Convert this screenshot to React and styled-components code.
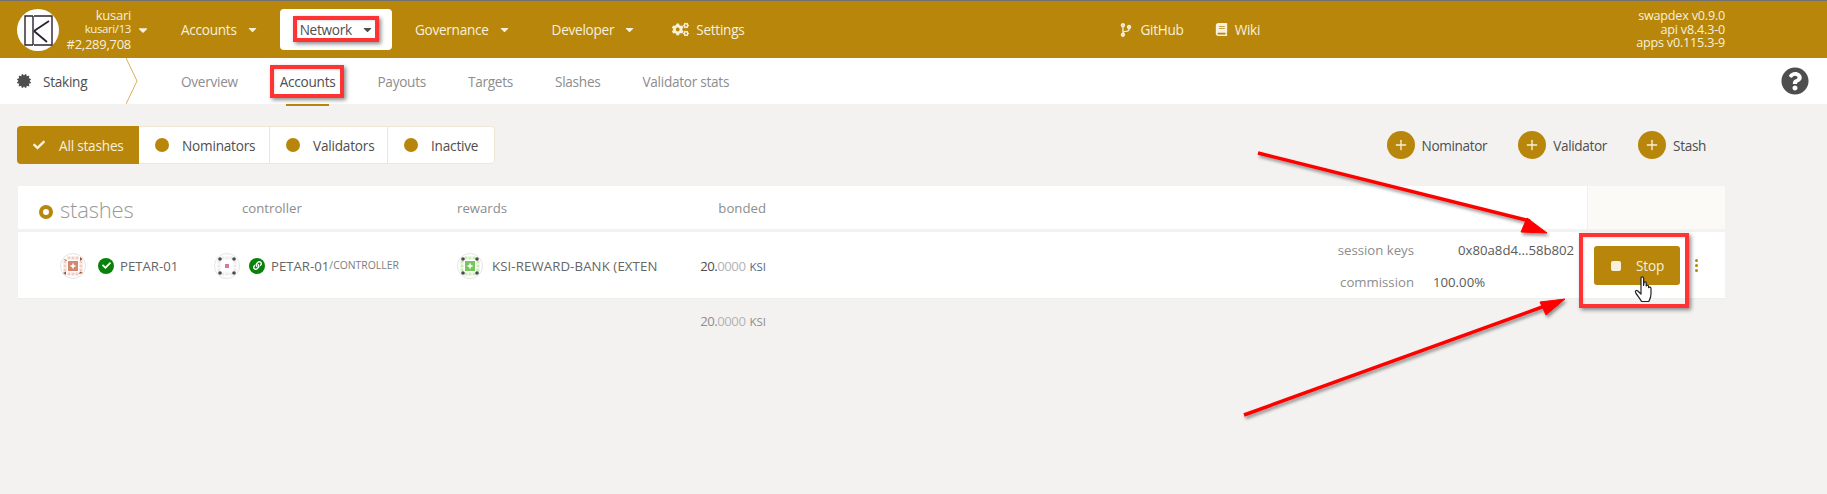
import React from 'react';
import styled, { createGlobalStyle } from 'styled-components';
import { FaCaretDown, FaCogs, FaCodeBranch, FaBook, FaCertificate, FaQuestionCircle, FaCheck, FaLink } from 'react-icons/fa';
import { Plus } from 'lucide-react';

const GOLD = '#b8860b';

const Global = createGlobalStyle`
  html, body { margin: 0; padding: 0; height: 494px; overflow: hidden; background: #f3f2f1; }
  body { font-family: "Open Sans", "Noto Sans", sans-serif; color: #4e4e4e; }
  * { box-sizing: border-box; }
`;

const Page = styled.div`
  position: relative;
  width: 1827px;
  height: 494px;
  overflow: hidden;
`;

const Header = styled.header`
  display: flex;
  align-items: center;
  height: 58px;
  background: ${GOLD};
  border-top: 1px solid #707070;
  padding: 0 102px 0 17px;
  color: #f6f0dc;
  font-size: 13.6px;
  letter-spacing: -0.27px;
`;

const BlockInfo = styled.div`
  display: flex;
  flex-direction: column;
  align-items: flex-end;
  width: 72px;
  line-height: 14.5px;
  font-size: 13px;
  white-space: nowrap;
`;

const BlockSub = styled.span`
  font-size: 11.5px;
  letter-spacing: -0.4px;
`;

const BlockCaret = styled.span`
  display: flex;
  margin: 1px 0 0 5px;
  font-size: 14px;
  width: 25px;
`;

const NavList = styled.nav`
  display: flex;
  align-items: center;
  gap: 3px;
`;

const NavItem = styled.div`
  display: flex;
  align-items: center;
  gap: ${p => p.$gap ?? 9}px;
  height: 41px;
  padding: ${p => p.$pad ?? '0 18px 0 20px'};
  border-radius: 4px;
  background: ${p => (p.$active ? '#fff' : 'transparent')};
  color: ${p => (p.$active ? '#4e4e4e' : 'inherit')};
  white-space: nowrap;
  svg { flex: none; }
`;

const Links = styled.div`
  display: flex;
  align-items: center;
  gap: 31px;
  margin-left: 375px;
  flex: 1;
`;

const LinkItem = styled.div`
  display: flex;
  align-items: center;
  gap: 7px;
`;

const Versions = styled.div`
  text-align: right;
  font-size: 12.6px;
  line-height: 13.5px;
  letter-spacing: -0.2px;
`;

const SubNav = styled.div`
  display: flex;
  align-items: center;
  height: 46px;
  background: #fff;
  font-size: 13.6px;
  letter-spacing: -0.27px;
  padding-left: 17px;
`;

const SectionName = styled.div`
  display: flex;
  align-items: center;
  gap: 12px;
  width: 109px;
  color: #4e4e4e;
`;

const Chevron = styled.svg`
  width: 12px;
  height: 46px;
  flex: none;
  margin-right: 43px;
`;

const Tabs = styled.div`
  display: flex;
  gap: 42px;
  height: 100%;
`;

const Tab = styled.div`
  position: relative;
  display: flex;
  align-items: center;
  color: ${p => (p.$active ? '#4e4e4e' : '#8d8d8d')};
  ${p => p.$active && `
    &::after {
      content: '';
      position: absolute;
      left: 6px;
      right: 6px;
      bottom: -2px;
      height: 2px;
      background: ${GOLD};
    }
  `}
`;

const Help = styled.div`
  display: flex;
  margin-left: auto;
  margin-right: 18px;
  color: #4e4e4e;
`;

const Content = styled.main`
  padding: 22px 102px 0 17px;
`;

const Toolbar = styled.div`
  display: flex;
  align-items: center;
  justify-content: space-between;
  height: 38px;
`;

const FilterGroup = styled.div`
  display: flex;
  height: 38px;
  border-radius: 4px;
  border: 1px solid #efe7d5;
  background: #fff;
  font-size: 13.6px;
  letter-spacing: -0.2px;
`;

const Filter = styled.div`
  display: flex;
  align-items: center;
  gap: ${p => (p.$active ? 14 : 13)}px;
  width: ${p => p.$w}px;
  padding-left: 16px;
  margin: ${p => (p.$active ? '-1px 0 -1px -1px' : '0')};
  background: ${p => (p.$active ? GOLD : 'transparent')};
  color: ${p => (p.$active ? '#f6f0dc' : '#4e4e4e')};
  border-radius: ${p => (p.$active ? '4px 0 0 4px' : '0')};
  border-right: ${p => (p.$last || p.$active ? '0' : '1px solid #efe7d5')};
  white-space: nowrap;
`;

const Dot = styled.span`
  width: 14px;
  height: 14px;
  border-radius: 50%;
  background: ${GOLD};
  flex: none;
`;

const Actions = styled.div`
  display: flex;
  margin-right: 19px;
  gap: 31px;
`;

const AddButton = styled.div`
  display: flex;
  align-items: center;
  gap: 7px;
  font-size: 13.6px;
  letter-spacing: -0.35px;
  color: #4e4e4e;
`;

const AddIcon = styled.span`
  display: flex;
  align-items: center;
  justify-content: center;
  width: 28px;
  height: 28px;
  border-radius: 50%;
  background: ${GOLD};
  color: #f6f0dc;
`;

const Table = styled.div`
  margin: 22px 0 0 1px;
  display: flex;
  flex-direction: column;
`;

const Columns = `
  display: grid;
  grid-template-columns: 196px 243px 208px 105px 1fr 138px;
`;

const HeadRow = styled.div`
  ${Columns}
  height: 43px;
  background: #fff;
  font-size: 13.2px;
  color: #8d8d8d;
  align-items: stretch;
`;

const HeadTitle = styled.div`
  display: flex;
  align-items: center;
  gap: 7px;
  padding-left: 21px;
`;

const TitleIcon = styled.span`
  width: 14px;
  height: 14px;
  margin-top: 8px;
  border-radius: 50%;
  border: 4px solid ${GOLD};
  background: #fff;
`;

const TitleText = styled.span`
  font-size: 22px;
  font-weight: 300;
  color: #999;
  margin-top: 2px;
  letter-spacing: -0.2px;
`;

const HeadCell = styled.div`
  display: flex;
  align-items: center;
  justify-content: ${p => (p.$right ? 'flex-end' : 'flex-start')};
  padding: 0 ${p => p.$pr ?? 0}px 0 ${p => p.$pl ?? 0}px;
`;

const ActionHead = styled.div`
  background: #fbfaf7;
  border-left: 1px solid #f1f0ee;
`;

const Row = styled.div`
  ${Columns}
  margin-top: 3px;
  height: 67px;
  padding-top: 1px;
  background: #fff;
  border-bottom: 1px solid #eeeeec;
  font-size: 13.2px;
  align-items: center;
`;

const Who = styled.div`
  display: flex;
  align-items: center;
  padding-left: ${p => p.$pl ?? 0}px;
  min-width: 0;
  white-space: nowrap;
  color: #666;
`;

const Badge = styled.span`
  display: flex;
  align-items: center;
  justify-content: center;
  width: 16px;
  height: 16px;
  border-radius: 50%;
  background: #0a810a;
  color: #fff;
  margin: 0 6px 0 ${p => p.$ml ?? 8}px;
  flex: none;
`;

const Clipped = styled.span`
  display: block;
  overflow: hidden;
  width: 166px;
  margin-left: 9px;
  letter-spacing: 0.12px;
`;

const Suffix = styled.span`
  font-size: 10.4px;
  color: #7d7d7d;
  margin-top: -2px;
`;

const Amount = styled.div`
  display: flex;
  justify-content: flex-end;
  align-items: baseline;
  padding-right: 4px;
  font-size: 13.2px;
  letter-spacing: -0.5px;
  color: ${p => (p.$muted ? '#8d8d8d' : '#4e4e4e')};
`;

const Fraction = styled.span`
  color: #b4b4b4;
`;

const Unit = styled.span`
  font-size: 11.5px;
  margin-left: 4px;
  letter-spacing: 0;
  color: ${p => (p.$muted ? '#8d8d8d' : '#5a6a80')};
`;

const Info = styled.div`
  display: grid;
  grid-template-columns: 1fr 159px;
  row-gap: 14px;
  padding-right: 14px;
  line-height: 18px;
`;

const InfoLabel = styled.div`
  text-align: right;
  color: #8d8d8d;
`;

const InfoValue = styled.div`
  padding-left: ${p => p.$indent}px;
  color: #5a5a5a;
  white-space: nowrap;
`;

const ActionCell = styled.div`
  display: flex;
  align-items: center;
  padding-left: 7px;
`;

const StopButton = styled.div`
  display: flex;
  align-items: center;
  gap: 15px;
  width: 86px;
  height: 39px;
  padding-left: 17px;
  border-radius: 3px;
  background: ${GOLD};
  color: #f6f0dc;
  font-size: 13.6px;
  letter-spacing: -0.2px;
`;

const StopIcon = styled.span`
  width: 10px;
  height: 10px;
  border-radius: 2px;
  background: #f6f0dc;
`;

const MoreDots = styled.div`
  display: flex;
  flex-direction: column;
  gap: 2px;
  margin-left: 15px;
  span {
    width: 3px;
    height: 3px;
    border-radius: 50%;
    background: ${GOLD};
  }
`;

const TotalRow = styled.div`
  ${Columns}
  height: 43px;
  align-items: center;
  > :first-child { grid-column: 4; }
`;

const Callout = styled.div`
  position: absolute;
  left: ${p => p.$x}px;
  top: ${p => p.$y}px;
  width: ${p => p.$w}px;
  height: ${p => p.$h}px;
  border: 4px solid #ff3333;
  box-shadow: 2px 2px 4px rgba(0, 0, 0, .45), inset 1px 1px 2px rgba(0,0,0,.12);
  pointer-events: none;
`;

const Overlay = styled.svg`
  position: absolute;
  left: 0;
  top: 0;
  pointer-events: none;
`;

const Hand = styled.svg`
  position: absolute;
  left: 1634px;
  top: 275px;
`;

const Logo = () => (
  <svg width="42" height="42" viewBox="0 0 42 42" style={{ flex: 'none' }}>
    <circle cx="21" cy="21" r="21" fill="#fff" />
    <g fill="none" stroke="#2b2230" strokeWidth="1.4">
      <path d="M16 7H8V36H16" />
      <path d="M16 7V36" />
      <path d="M17 7H35V36H17" />
      <path d="M17 22L32 12" strokeWidth="1.8" />
      <path d="M17 22L30 33" strokeWidth="1.8" />
    </g>
  </svg>
);

const IdentBase = ({ children }) => (
  <svg width="26" height="26" viewBox="0 0 26 26" style={{ flex: 'none' }}>
    <circle cx="13" cy="13" r="12.5" fill="#fff" stroke="#e4e4e4" />
    {children}
  </svg>
);

const corners = [[6, 6], [20, 6], [6, 20], [20, 20]];
const ring = [[9, 5], [13, 5], [17, 5], [5, 9], [21, 9], [5, 13], [21, 13], [5, 17], [21, 17], [9, 21], [13, 21], [17, 21]];

const IdentA = () => (
  <IdentBase>
    {ring.map(([x, y]) => <rect key={`${x}-${y}`} x={x - 1.5} y={y - 1.5} width="3" height="3" fill="#f2cfc4" />)}
    <rect x="8" y="8" width="10" height="10" fill="#d2886e" />
    <path d="M13 9.5L14 12L16.5 13L14 14L13 16.5L12 14L9.5 13L12 12Z" fill="#fff" />
    <path d="M3.5 6L7 7L6 8ZM22.5 6L20 4L20 8ZM3 20L6 18.5L6 22ZM23 20L20 18.5L19 21Z" fill="#a84f33" />
  </IdentBase>
);

const IdentB = () => (
  <IdentBase>
    {ring.map(([x, y]) => <rect key={`${x}-${y}`} x={x - 1.5} y={y - 1.5} width="3" height="3" fill="#ececec" />)}
    {corners.map(([x, y]) => <circle key={`${x}-${y}`} cx={x} cy={y} r="1.8" fill="#4a4a4a" />)}
    <rect x="11" y="11" width="4" height="4" fill="#d77a95" />
  </IdentBase>
);

const IdentC = () => (
  <IdentBase>
    {ring.map(([x, y]) => <rect key={`${x}-${y}`} x={x - 1.5} y={y - 1.5} width="3" height="3" fill="#cdecb8" />)}
    <rect x="8" y="8" width="10" height="10" fill="#77c65c" />
    <path d="M13 9.5L14 12L16.5 13L14 14L13 16.5L12 14L9.5 13L12 12Z" fill="#fff" />
    {corners.map(([x, y]) => <circle key={`${x}-${y}`} cx={x} cy={y} r="1.8" fill="#4a4a4a" />)}
  </IdentBase>
);

const Arrows = () => (
  <Overlay width="1827" height="494" viewBox="0 0 1827 494">
    <defs>
      <filter id="arrowShadow" x="-5%" y="-20%" width="110%" height="140%">
        <feDropShadow dx="1.5" dy="2.5" stdDeviation="1.5" floodColor="#000" floodOpacity=".4" />
      </filter>
    </defs>
    <g filter="url(#arrowShadow)" fill="#ff0000" stroke="#ff0000">
      <path d="M1258 153L1530 221" strokeWidth="3.5" fill="none" />
      <path d="M1547 233L1521 232L1527 218Z" strokeWidth="1" />
      <path d="M1244 415L1545 306" strokeWidth="3.5" fill="none" />
      <path d="M1565 299L1546 315L1540 302Z" strokeWidth="1" />
    </g>
  </Overlay>
);

export default function App() {
  return (
    <Page>
      <Global />
      <Header>
        <Logo />
        <BlockInfo>
          <span>kusari</span>
          <BlockSub>kusari/13</BlockSub>
          <span>#2,289,708</span>
        </BlockInfo>
        <BlockCaret><FaCaretDown /></BlockCaret>
        <NavList>
          <NavItem>Accounts <FaCaretDown size={13} /></NavItem>
          <NavItem $active>Network <FaCaretDown size={13} /></NavItem>
          <NavItem>Governance <FaCaretDown size={13} /></NavItem>
          <NavItem>Developer <FaCaretDown size={13} /></NavItem>
          <NavItem $gap={7} $pad="0 0 0 15px"><FaCogs size={17} /> Settings</NavItem>
        </NavList>
        <Links>
          <LinkItem><FaCodeBranch size={14} /> GitHub</LinkItem>
          <LinkItem><FaBook size={13} /> Wiki</LinkItem>
        </Links>
        <Versions>
          <div>swapdex v0.9.0</div>
          <div>api v8.4.3-0</div>
          <div>apps v0.115.3-9</div>
        </Versions>
      </Header>
      <SubNav>
        <SectionName><FaCertificate size={14} /> Staking</SectionName>
        <Chevron viewBox="0 0 12 46"><path d="M0 0L11 23L0 46" fill="none" stroke="#dcae5a" strokeWidth="1" /></Chevron>
        <Tabs>
          <Tab>Overview</Tab>
          <Tab $active>Accounts</Tab>
          <Tab>Payouts</Tab>
          <Tab>Targets</Tab>
          <Tab>Slashes</Tab>
          <Tab>Validator stats</Tab>
        </Tabs>
        <Help><FaQuestionCircle size={28} /></Help>
      </SubNav>
      <Content>
        <Toolbar>
          <FilterGroup>
            <Filter $active $w={122}><FaCheck size={12} /> All stashes</Filter>
            <Filter $w={131}><Dot /> Nominators</Filter>
            <Filter $w={118}><Dot /> Validators</Filter>
            <Filter $w={106} $last><Dot /> Inactive</Filter>
          </FilterGroup>
          <Actions>
            <AddButton><AddIcon><Plus size={16} /></AddIcon> Nominator</AddButton>
            <AddButton><AddIcon><Plus size={16} /></AddIcon> Validator</AddButton>
            <AddButton><AddIcon><Plus size={16} /></AddIcon> Stash</AddButton>
          </Actions>
        </Toolbar>
        <Table>
          <HeadRow>
            <HeadTitle><TitleIcon /><TitleText>stashes</TitleText></HeadTitle>
            <HeadCell $pl={28}>controller</HeadCell>
            <HeadCell>rewards</HeadCell>
            <HeadCell $right $pr={4}>bonded</HeadCell>
            <div />
            <ActionHead />
          </HeadRow>
          <Row>
            <Who $pl={42}><IdentA /><Badge $ml={12}><FaCheck size={9} /></Badge>PETAR-01</Who>
            <Who><IdentB /><Badge $ml={9}><FaLink size={9} /></Badge>PETAR-01<Suffix>/CONTROLLER</Suffix></Who>
            <Who><IdentC /><Clipped>KSI-REWARD-BANK (EXTENSION)</Clipped></Who>
            <Amount>20.<Fraction>0000</Fraction><Unit>KSI</Unit></Amount>
            <Info>
              <InfoLabel>session keys</InfoLabel>
              <InfoValue $indent={44}>0x80a8d4...58b802</InfoValue>
              <InfoLabel>commission</InfoLabel>
              <InfoValue $indent={19}>100.00%</InfoValue>
            </Info>
            <ActionCell>
              <StopButton><StopIcon /> Stop</StopButton>
              <MoreDots><span /><span /><span /></MoreDots>
            </ActionCell>
          </Row>
          <TotalRow>
            <Amount $muted>20.<Fraction>0000</Fraction><Unit $muted>KSI</Unit></Amount>
          </TotalRow>
        </Table>
      </Content>
      <Callout $x={293} $y={16} $w={86} $h={26} />
      <Callout $x={270} $y={65} $w={74} $h={33} />
      <Callout $x={1579} $y={233} $w={110} $h={75} />
      <Arrows />
      <Hand width="20" height="28" viewBox="0 0 20 28">
        <path d="M7 3.2C7 1.4 9.6 1.4 9.6 3.2V10.5L10 7.6C10.4 6.4 12.2 6.6 12.2 8V11C12.6 9.8 14.6 10 14.6 11.4V12.6C15.2 11.6 17 12 17 13.4V19C17 22 15.6 25 14.8 26.5H7.6C6.6 24.5 3 20 1.6 17.6C0.8 16 2.4 14.8 3.8 16L7 19Z" fill="#fff" stroke="#222" strokeWidth="1.2" strokeLinejoin="round" />
      </Hand>
    </Page>
  );
}
